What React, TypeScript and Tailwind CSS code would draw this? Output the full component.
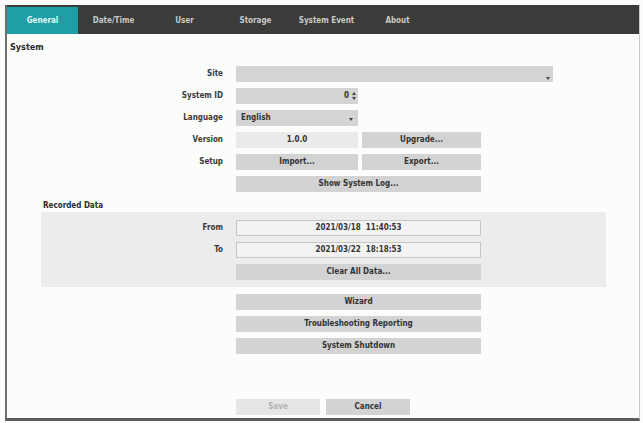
import React from 'react';

const tabs = ['General', 'Date/Time', 'User', 'Storage', 'System Event', 'About'];

const font = { fontFamily: '"DejaVu Sans Condensed", "DejaVu Sans", sans-serif' };

const Label: React.FC<{ children?: React.ReactNode; w?: string }> = ({ children, w = 'w-[229px]' }) => (
  <div className={`${w} shrink-0 pr-[13px] text-right text-[8px] font-bold text-[#3a3a3a]`}>{children}</div>
);

const Btn: React.FC<{ children: React.ReactNode; className?: string }> = ({ children, className = '' }) => (
  <div className={`flex h-[16px] items-center justify-center bg-[#d3d3d3] text-[8px] font-bold text-[#333] ${className}`}>
    {children}
  </div>
);

const Row: React.FC<{ label?: string; children: React.ReactNode }> = ({ label, children }) => (
  <div className="flex h-[16px] items-center">
    <Label>{label}</Label>
    {children}
  </div>
);

export default function App() {
  return (
    <div className="h-[423px] w-[643px] bg-[#fbfcfb] pl-[5px] pt-[5px]" style={font}>
      <div className="flex h-[416px] w-[635px] flex-col border-b-[3px] border-l-2 border-r border-b-[#5c5c5c] border-l-[#6e6e6e] border-r-[#c9c9c9] bg-[#fbfdfb]">
        {/* tab strip */}
        <div className="flex h-[29px] shrink-0 bg-[#3b3b39] pt-[2px]">
          {tabs.map((t, i) => (
            <div
              key={t}
              className={`flex w-[71px] items-center justify-center text-[8px] font-bold ${
                i === 0 ? 'w-[70px] bg-[#1f9ea6] text-[#e6f6f7]' : 'text-[#c9c9c6]'
              }`}
            >
              {t}
            </div>
          ))}
        </div>

        <div className="px-[3px] pt-[7px] text-[9px] font-bold text-[#2b2b2b]">System</div>

        <div className="mt-[11px] flex flex-col gap-[6px]">
          <Row label="Site">
            <div className="relative h-full w-[317px] bg-[#d4d4d4]">
              <span className="absolute bottom-[2px] right-[3px] h-0 w-0 border-x-[2px] border-t-[3px] border-x-transparent border-t-[#444]" />
            </div>
          </Row>
          <Row label="System ID">
            <div className="flex h-full w-[122px] items-center justify-end bg-[#d4d4d4] pr-[2px] text-[8px] font-bold text-[#333]">
              0
              <span className="ml-[3px] flex flex-col gap-[2px]">
                <span className="h-0 w-0 border-x-[2px] border-b-[3px] border-x-transparent border-b-[#444]" />
                <span className="h-0 w-0 border-x-[2px] border-t-[3px] border-x-transparent border-t-[#444]" />
              </span>
            </div>
          </Row>
          <Row label="Language">
            <div className="flex h-full w-[122px] items-center justify-between bg-[#d4d4d4] pl-[5px] pr-[5px] text-[8px] font-bold text-[#333]">
              English
              <span className="mt-[4px] h-0 w-0 border-x-[2px] border-t-[3px] border-x-transparent border-t-[#444]" />
            </div>
          </Row>
          <Row label="Version">
            <div className="flex h-full w-[122px] items-center justify-center bg-[#ebebeb] text-[8px] font-bold text-[#333]">
              1.0.0
            </div>
            <Btn className="ml-[4px] w-[119px]">Upgrade...</Btn>
          </Row>
          <Row label="Setup">
            <Btn className="w-[122px]">Import...</Btn>
            <Btn className="ml-[4px] w-[119px]">Export...</Btn>
          </Row>
          <Row>
            <Btn className="w-[245px]">Show System Log...</Btn>
          </Row>
        </div>

        <div className="ml-[36px] mt-[8px] text-[8px] font-bold text-[#2b2b2b]">Recorded Data</div>

        <div className="ml-[34px] flex w-[565px] flex-col gap-[6px] bg-[#ececec] pb-[7px] pt-[8px]">
          {[
            ['From', '2021/03/18  11:40:53'],
            ['To', '2021/03/22  18:18:53'],
          ].map(([l, v]) => (
            <div key={l} className="flex h-[16px] items-center">
              <Label w="w-[195px]">{l}</Label>
              <div className="flex h-full w-[245px] items-center justify-center whitespace-pre border border-[#c6c6c6] bg-[#f3f3f3] text-[8px] font-bold text-[#333]">
                {v}
              </div>
            </div>
          ))}
          <div className="flex h-[16px]">
            <div className="w-[195px]" />
            <Btn className="w-[245px]">Clear All Data...</Btn>
          </div>
        </div>

        <div className="mt-[7px] flex flex-col gap-[6px]">
          <Row>
            <Btn className="w-[245px]">Wizard</Btn>
          </Row>
          <Row>
            <Btn className="w-[245px]">Troubleshooting Reporting</Btn>
          </Row>
          <Row>
            <Btn className="w-[245px]">System Shutdown</Btn>
          </Row>
        </div>

        <div className="mt-auto mb-[3px] flex h-[16px] items-center">
          <div className="w-[229px]" />
          <div className="flex h-full w-[84px] items-center justify-center bg-[#e6e6e6] text-[8px] font-bold text-[#b4b4b4]">
            Save
          </div>
          <Btn className="ml-[6px] w-[84px]">Cancel</Btn>
        </div>
      </div>
    </div>
  );
}
